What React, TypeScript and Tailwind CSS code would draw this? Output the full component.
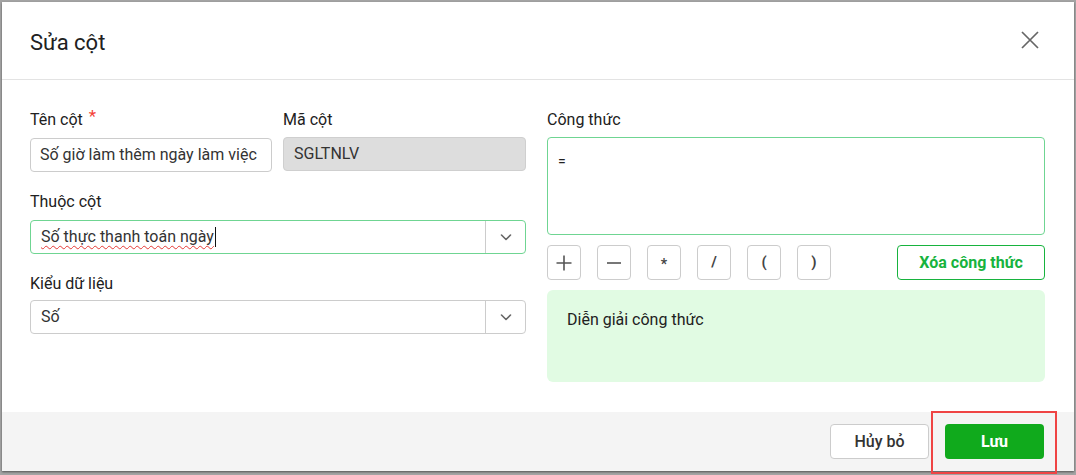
import React from "react";

const OPS = ["+", "−", "*", "/", "(", ")"];

function Chevron() {
  return (
    <svg width="14" height="14" viewBox="0 0 14 14" fill="none">
      <path d="M2.5 5l4.5 4.5L11.5 5" stroke="#666" strokeWidth="1.6" strokeLinecap="round" strokeLinejoin="round" />
    </svg>
  );
}

function OpIcon({ op }: { op: string }) {
  if (op === "+")
    return (
      <svg width="18" height="18" viewBox="0 0 18 18">
        <path d="M9 1.5v15M1.5 9h15" stroke="#555" strokeWidth="1.6" />
      </svg>
    );
  if (op === "−")
    return (
      <svg width="18" height="18" viewBox="0 0 18 18">
        <path d="M2 9h14" stroke="#555" strokeWidth="1.6" />
      </svg>
    );
  if (op === "*") return <span className="mt-[3px] text-[14px] font-bold text-[#444]">*</span>;
  return <span className="text-[15px] font-bold text-[#444]">{op}</span>;
}

function Select({ value, focused }: { value: React.ReactNode; focused?: boolean }) {
  return (
    <div
      className={`flex h-[34px] items-stretch rounded-[4px] border bg-white ${
        focused ? "border-[#6fd592]" : "border-[#cccccc]"
      }`}
    >
      <div className="flex flex-1 items-center px-[10px] text-[16px] text-[#333]">{value}</div>
      <div className="flex w-[40px] items-center justify-center border-l border-[#cccccc]">
        <Chevron />
      </div>
    </div>
  );
}

export default function App() {
  return (
    <div
      className="relative h-[475px] w-[1076px] bg-[#a4a4a4] pl-[2px] pr-[2px] pt-[2px]"
      style={{ fontFamily: "Roboto, 'Noto Sans', sans-serif" }}
    >
      <div className="flex h-[469px] w-[1072px] flex-col bg-white shadow-[0_1px_2px_rgba(0,0,0,0.5)]">
        {/* header */}
        <div className="flex h-[78px] shrink-0 items-center justify-between border-b border-[#e3e3e3] pl-[28px] pr-[34px] pt-[3px]">
          <h1 className="text-[22px] text-[#212121]">Sửa cột</h1>
          <svg width="20" height="20" viewBox="0 0 20 20" className="-mt-[5px]">
            <path d="M2 2l16 16M18 2L2 18" stroke="#666" strokeWidth="1.7" />
          </svg>
        </div>

        {/* body */}
        <div className="flex flex-1 gap-[21px] pl-[28px] pr-[29px] pt-[30px]">
          <div className="flex w-[496px] flex-col">
            <div className="flex gap-[11px]">
              <div className="w-[242px]">
                <div className="mb-[8px] flex h-[20px] items-center text-[16px] text-[#212121]">
                  Tên cột <span className="ml-[6px] -mt-[6px] text-[17px] text-[#f44336]">*</span>
                </div>
                <div className="flex h-[34px] items-center overflow-hidden whitespace-nowrap rounded-[4px] border border-[#cccccc] px-[9px] text-[16px] text-[#333]">
                  Số giờ làm thêm ngày làm việc
                </div>
              </div>
              <div className="w-[243px]">
                <div className="mb-[7px] flex h-[20px] items-center text-[16px] text-[#212121]">Mã cột</div>
                <div className="flex h-[34px] items-center rounded-[4px] border border-[#cfcfcf] bg-[#dddddd] px-[10px] text-[16px] text-[#333]">
                  SGLTNLV
                </div>
              </div>
            </div>

            <div className="mb-[8px] mt-[20px] flex h-[20px] items-center text-[16px] text-[#212121]">Thuộc cột</div>
            <Select
              focused
              value={
                <span className="flex items-center">
                  <span className="underline decoration-[#e53935] decoration-wavy decoration-1 underline-offset-[3px]">
                    Số thực thanh toán ngày
                  </span>
                  <span className="ml-[1px] inline-block h-[20px] w-[1px] bg-[#111]" />
                </span>
              }
            />

            <div className="mb-[6px] mt-[20px] flex h-[20px] items-center text-[16px] text-[#212121]">Kiểu dữ liệu</div>
            <Select value="Số" />
          </div>

          <div className="flex w-[498px] flex-col">
            <div className="mb-[7px] flex h-[20px] items-center text-[16px] text-[#212121]">Công thức</div>
            <div className="h-[98px] rounded-[4px] border border-[#6fd592] px-[10px] pt-[13px] text-[14px] text-[#222]">=</div>

            <div className="mt-[10px] flex items-center gap-[16px]">
              {OPS.map((op) => (
                <div
                  key={op}
                  className="flex h-[35px] w-[34px] items-center justify-center rounded-[4px] border border-[#cccccc] bg-white"
                >
                  <OpIcon op={op} />
                </div>
              ))}
              <div className="ml-auto flex h-[35px] w-[148px] items-center justify-center rounded-[4px] border border-[#17b33e] text-[16px] font-bold text-[#17b33e]">
                Xóa công thức
              </div>
            </div>

            <div className="mt-[10px] h-[92px] rounded-[6px] bg-[#e1fbe3] px-[20px] pt-[18px] text-[16px] text-[#212121]">
              Diễn giải công thức
            </div>
          </div>
        </div>

        {/* footer */}
        <div className="flex h-[59px] shrink-0 items-center justify-end gap-[16px] bg-[#f4f4f4] pr-[30px]">
          <div className="flex h-[35px] w-[99px] items-center justify-center rounded-[4px] border border-[#cccccc] bg-white text-[16px] font-medium text-[#333]">
            Hủy bỏ
          </div>
          <div className="flex h-[35px] w-[99px] items-center justify-center rounded-[4px] bg-[#10aa1c] text-[16px] font-bold text-white">
            Lưu
          </div>
        </div>
      </div>

      {/* highlight annotation */}
      <div className="absolute left-[931px] top-[411px] h-[63px] w-[126px] border-2 border-[#ef4444]" />
    </div>
  );
}
